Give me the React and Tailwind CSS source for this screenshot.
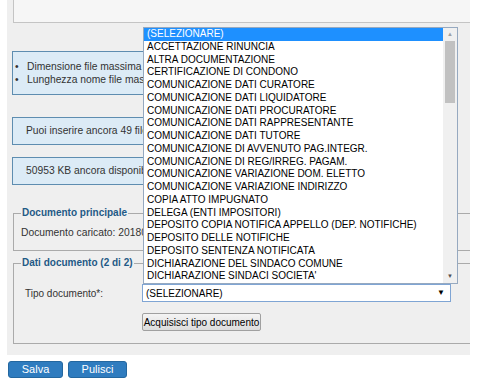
import React from "react";

const items = [
  "ACCETTAZIONE RINUNCIA",
  "ALTRA DOCUMENTAZIONE",
  "CERTIFICAZIONE DI CONDONO",
  "COMUNICAZIONE DATI CURATORE",
  "COMUNICAZIONE DATI LIQUIDATORE",
  "COMUNICAZIONE DATI PROCURATORE",
  "COMUNICAZIONE DATI RAPPRESENTANTE",
  "COMUNICAZIONE DATI TUTORE",
  "COMUNICAZIONE DI AVVENUTO PAG.INTEGR.",
  "COMUNICAZIONE DI REG/IRREG. PAGAM.",
  "COMUNICAZIONE VARIAZIONE DOM. ELETTO",
  "COMUNICAZIONE VARIAZIONE INDIRIZZO",
  "COPIA ATTO IMPUGNATO",
  "DELEGA (ENTI IMPOSITORI)",
  "DEPOSITO COPIA NOTIFICA APPELLO (DEP. NOTIFICHE)",
  "DEPOSITO DELLE NOTIFICHE",
  "DEPOSITO SENTENZA NOTIFICATA",
  "DICHIARAZIONE DEL SINDACO COMUNE",
  "DICHIARAZIONE SINDACI SOCIETA'",
];

export default function App() {
  return (
    <div className="relative w-[479px] h-[382px] overflow-hidden bg-white font-['Liberation_Sans',Arial,sans-serif] text-[10px] text-[#222]">
      <div className="ml-[7px] w-[463px] h-[355px] bg-[#efefef] overflow-hidden flex flex-col">
        <div className="ml-[6px] w-[480px] h-[23px] shrink-0 border-l border-b border-[#c4c4c4] bg-[#f6f6f6]" />

        <div className="ml-[5px] mt-[28px] w-[438px] h-[44px] shrink-0 border border-[#5e8db0] bg-[#dcebf6] pt-[8px] pl-[2px] leading-[13px] text-[10.3px] text-[#333]">
          <div className="flex">
            <span className="w-[12px]">•</span>
            <span>Dimensione file massima 10 MB</span>
          </div>
          <div className="flex">
            <span className="w-[12px]">•</span>
            <span>Lunghezza nome file massima 100 caratteri</span>
          </div>
        </div>

        <div className="ml-[5px] mt-[22px] w-[438px] h-[28px] shrink-0 border border-[#5e8db0] bg-[#dcebf6] pl-[13px] flex items-center text-[10.3px] text-[#333]">
          Puoi inserire ancora 49 file
        </div>

        <div className="ml-[5px] mt-[12px] w-[438px] h-[28px] shrink-0 border border-[#5e8db0] bg-[#dcebf6] pl-[13px] flex items-center text-[10.3px] text-[#333]">
          50953 KB ancora disponibili
        </div>

        <fieldset className="ml-[6px] mt-[22px] w-[480px] shrink-0 border border-[#aaaaaa] pl-[7px] pt-[8px] pb-[11px]">
          <legend className="px-[1px] font-bold leading-[12px] text-[#1f5a86]">Documento principale</legend>
          <div className="leading-[12px] text-[10.3px] text-[#333]">Documento caricato: 20180515_documento.pdf</div>
        </fieldset>

        <fieldset className="ml-[6px] mt-[6px] w-[480px] shrink-0 border border-[#aaaaaa] pl-[7px] pt-[15px] pb-[12px]">
          <legend className="px-[1px] font-bold leading-[12px] text-[#1f5a86]">Dati documento (2 di 2)</legend>
          <div className="flex items-center">
            <div className="w-[121px] pl-[4px] text-[#333]">Tipo documento*:</div>
            <div className="w-[309px] h-[18px] border border-[#7fa5d4] bg-white flex items-center justify-between pl-[3px] pr-[5px] text-black">
              <span>(SELEZIONARE)</span>
              <span className="text-[8px]">▼</span>
            </div>
          </div>
          <div className="ml-[121px] mt-[11px] w-[119px] h-[18px] border border-[#a0a0a0] rounded-[2px] bg-gradient-to-b from-[#f4f4f4] to-[#dcdcdc] flex items-center justify-center text-black">
            Acquisisci tipo documento
          </div>
        </fieldset>
      </div>

      <div className="flex gap-[5px] ml-[8px] mt-[6px]">
        <div className="w-[55px] h-[17px] rounded-[3px] border border-[#24679f] bg-[#2f7cbf] text-white text-[11px] flex items-center justify-center">
          Salva
        </div>
        <div className="w-[59px] h-[17px] rounded-[3px] border border-[#24679f] bg-[#2f7cbf] text-white text-[11px] flex items-center justify-center">
          Pulisci
        </div>
      </div>

      <div className="absolute left-[143px] top-[27px] w-[315px] h-[257px] border border-[#96a9c0] bg-white flex">
        <div className="flex-1 overflow-hidden text-black">
          <div className="h-[12.75px] leading-[12.75px] pl-[3px] bg-[#1e90ff] text-white">(SELEZIONARE)</div>
          {items.map((t) => (
            <div key={t} className="h-[12.75px] leading-[12.75px] pl-[3px] whitespace-nowrap">{t}</div>
          ))}
        </div>
        <div className="w-[14px] bg-[#f0f0f0] flex flex-col items-center">
          <div className="h-[13px] flex items-center justify-center text-[6px] text-[#a0a0a0]">▲</div>
          <div className="w-[10px] h-[62px] bg-[#c1c1c1]" />
          <div className="flex-1" />
          <div className="h-[13px] flex items-center justify-center text-[6px] text-[#505050]">▼</div>
        </div>
      </div>
    </div>
  );
}
